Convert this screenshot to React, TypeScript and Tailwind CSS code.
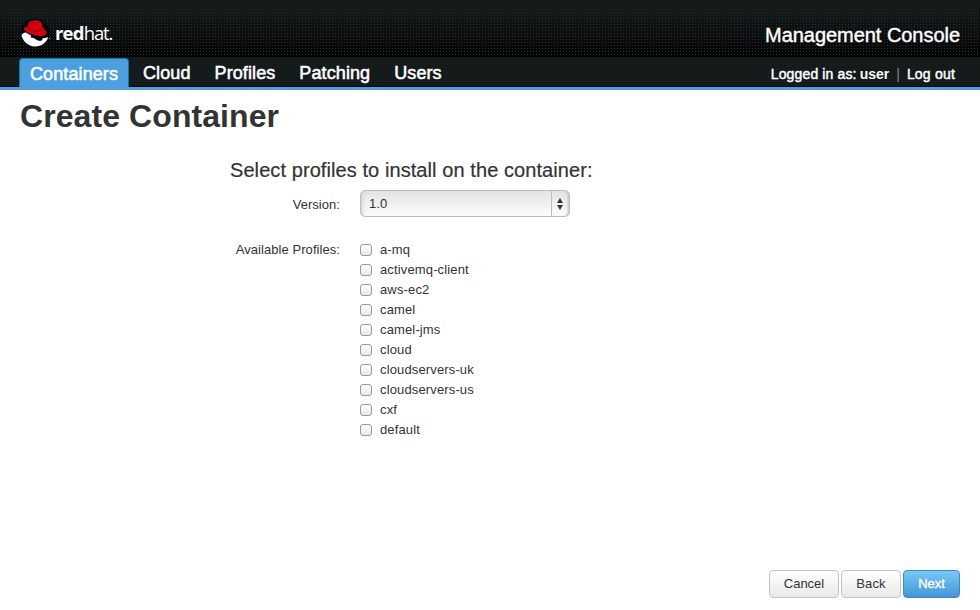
import React from "react";

const tabs = ["Cloud", "Profiles", "Patching", "Users"];
const profiles = ["a-mq", "activemq-client", "aws-ec2", "camel", "camel-jms", "cloud", "cloudservers-uk", "cloudservers-us", "cxf", "default"];

function Logo() {
  return (
    <div className="flex h-[30px] items-center">
      <svg width="30" height="30" viewBox="0 0 30 30">
        <circle cx="14" cy="14.5" r="14" fill="#020303" />
        <path d="M.4 17 C1.5 23 7 28.3 14 28.5 C20.5 28.6 25.7 24.3 27.2 19 C25.5 19.8 23.6 20.2 21.8 20.2 L20.8 22.6 C18 23.4 15.2 22 13.2 19.9 L9.8 19.5 L10 17.6 C8 16.7 6.3 15.6 5 14.6 C3.2 14.4 1.8 15.3 .4 17Z" fill="#fff" />
        <path d="M13.5 19.2 L16.5 20 L20.8 19.6 L19 21.2 L15.5 21.3Z" fill="#020303" />
        <path d="M7.6 4.6 C9.2 1.9 11.6 3.8 13.4 2.5 C16.5 1.8 19.8 2.9 20.7 5.3 L22.2 10.8 C25 12.2 26.6 14.6 25 16.4 C22.6 18.7 17.4 18.3 13 17 C7.8 15.4 2.8 12.8 3 10.4 C3.2 8.9 4.9 8.8 6.7 9Z" fill="#d5000f" />
        <path d="M6.9 9 C8.5 12.2 16 14.6 21.4 11.9 M9.6 5.4 C11.5 5 13.4 6 14.7 6.6 M14.8 4.4 L17.8 4.7" fill="none" stroke="#700009" strokeWidth=".8" />
        <circle cx="28.6" cy="20.5" r=".6" fill="#bbb" />
      </svg>
      <div className="ml-[4px] -mt-px font-['Open_Sans',sans-serif] text-[18.5px] leading-[26px] tracking-[-1.1px] text-white">
        <span className="font-bold tracking-[-0.8px]">red</span><span>hat.</span>
      </div>
    </div>
  );
}

function Checkbox({ label }: { label: string }) {
  return (
    <label className="flex h-5 items-center">
      <input type="checkbox" className="h-3 w-3 appearance-none rounded-[3px] border border-[#999] bg-linear-to-b from-white to-[#e8e8e8]" />
      <span className="ml-2 tracking-[0.14px]">{label}</span>
    </label>
  );
}

export default function App() {
  return (
    <div className="flex h-[610px] w-[980px] flex-col overflow-hidden bg-white font-['Liberation_Sans',Arial,sans-serif] text-[13px] leading-5 text-[#333]">
      <header className="flex h-[90px] flex-col border-b-[3px] border-[#4d9fdf] bg-[#151a1b] text-white">
        <div className="flex h-[57px] shrink-0 items-start justify-between bg-[linear-gradient(to_bottom,#151a1b_4px,transparent_20px),conic-gradient(from_90deg_at_2px_1px,transparent_270deg,#2a3032_0),linear-gradient(to_bottom,#151a1b_10%,#030404)] bg-size-[100%_100%,3px_3px,100%_100%] pr-5 pl-[21px] pt-[18px]">
          <Logo />
          <div className="mt-[3px] text-[20px] leading-7 tracking-[-0.04px] [-webkit-text-stroke:0.4px_white]">Management Console</div>
        </div>
        <div className="flex h-[30px] justify-between border-b border-black pr-[25px] pl-[19px]">
          <nav className="flex text-[18px] leading-8 [-webkit-text-stroke:0.55px_white]">
            <a className="mt-px h-[29px] w-[110px] rounded-t-[4px] border border-b-0 border-[#087ba8] bg-[#4d9fdf] pl-[10px] leading-[30px] tracking-[0.1px]">Containers</a>
            <div className="ml-[14px] flex gap-6 tracking-[0.1px]">{tabs.map(t => <a key={t}>{t}</a>)}</div>
          </nav>
          <div className="flex text-[14px] leading-[34px]">
            <span className="tracking-[0.14px] [-webkit-text-stroke:0.45px_white]">Logged in as:</span>
            <b className="ml-[3px]">user</b>
            <span className="mx-[7px] text-[#888]">|</span>
            <a className="tracking-[0.2px] [-webkit-text-stroke:0.45px_white]">Log out</a>
          </div>
        </div>
      </header>
      <main className="flex flex-1 flex-col px-5">
        <h1 className="mt-[6px] text-[32px] leading-10 font-bold tracking-[0.08px]">Create Container</h1>
        <section className="ml-[210px] mt-[24px]">
          <h2 className="text-[20px] leading-5 tracking-[0.08px] [-webkit-text-stroke:0.2px_#333]">Select profiles to install on the container:</h2>
          <div className="mt-[10px] -ml-[20px] flex">
            <label className="w-[130px] pt-[5px] text-right tracking-[0.05px]">Version:</label>
            <button className="ml-5 flex h-[27px] w-[210px] rounded-[5px] border border-[#bdbdbd] bg-linear-to-b from-[#e3e3e3] to-[#fdfdfd] text-left shadow-[inset_4px_0_4px_-3px_#ccc,inset_-3px_0_3px_-2px_#bbb]">
              <span className="flex-1 pl-2 leading-[25px] tracking-[0.14px]">1.0</span>
              <span className="flex w-[18px] items-center justify-center border-l border-[#bdbdbd] pr-[2px]">
                <svg width="6" height="12" viewBox="0 0 6 12" fill="#333"><path d="M3 0 6 5H0Z M0 7H6L3 12Z" /></svg>
              </span>
            </button>
          </div>
          <div className="mt-[23px] -ml-[20px] flex">
            <div className="w-[130px] text-right tracking-[0.06px]">Available Profiles:</div>
            <div className="ml-5">{profiles.map(p => <Checkbox key={p} label={p} />)}</div>
          </div>
        </section>
        <footer className="mt-auto mb-3 flex justify-end gap-[2px]">
          <button className="h-7 w-[70px] rounded-[4px] border border-[#c4c4c4] bg-linear-to-b from-white to-[#e9e9e9]">Cancel</button>
          <button className="h-7 w-[60px] rounded-[4px] border border-[#c4c4c4] bg-linear-to-b from-white to-[#e9e9e9] tracking-[0.14px]">Back</button>
          <button className="h-7 w-[57px] rounded-[4px] border border-[#3b8bc8] bg-linear-to-b from-[#77c9f5] to-[#4695d7] text-white [-webkit-text-stroke:0.35px_white]">Next</button>
        </footer>
      </main>
    </div>
  );
}
